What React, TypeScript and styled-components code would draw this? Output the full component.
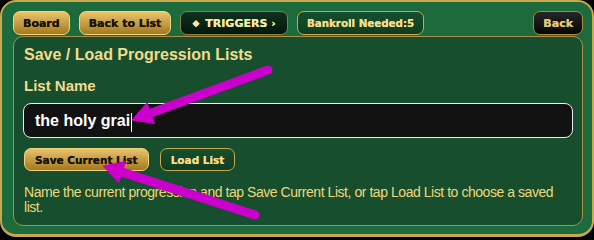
import React from "react";
import styled, { createGlobalStyle } from "styled-components";

const GlobalStyle = createGlobalStyle`
    html, body {
        margin: 0;
        padding: 0;
        background: #000;
    }
    * {
        box-sizing: border-box;
    }
`

const Frame = styled.div`
    position: relative;
    width: 594px;
    height: 237px;
    background: #1d6a3d;
    border: 2px solid #c9a74c;
    border-bottom-width: 3px;
    border-radius: 16px;
    padding: 9px 9px 0 11px;
    font-family: "Liberation Sans", Arial, sans-serif;
`

const TopBar = styled.div`
    display: flex;
    align-items: center;
    gap: 9px;
    height: 24px;
    margin-bottom: 1px;
`

const Spacer = styled.div`
    flex: 1;
`

type Tone = "gold" | "dark" | "green" | "black"

const tones: Record<Tone, string> = {
    gold: `
        background: linear-gradient(#e8c46a, #a4791e);
        border-color: #f0d47e;
        color: #1a1206;
        text-shadow: 0 0 0.6px #1a1206;
    `,
    dark: `
        background: linear-gradient(#0e3320, #03170c);
        border-color: #8d7c48;
        color: #f3eba6;
        text-shadow: 0 0 0.6px #f3eba6;
    `,
    green: `
        background: linear-gradient(#16502e, #0f3d22);
        border-color: #c8a850;
        color: #f5dc8a;
        text-shadow: 0 0 0.6px #f5dc8a;
    `,
    black: `
        background: linear-gradient(#262626, #050505);
        border-color: #a88a3c;
        color: #e8c878;
        text-shadow: 0 0 0.6px #e8c878;
    `,
}

const Button = styled.button<{ $tone: Tone; $size?: number }>`
    height: 24px;
    padding: 0 9px;
    border: 1px solid;
    border-radius: 7px;
    font-family: "DejaVu Sans", Verdana, sans-serif;
    font-weight: bold;
    font-size: ${(p) => p.$size ?? 11}px;
    white-space: nowrap;
    display: flex;
    align-items: center;
    gap: 6px;
    ${(p) => tones[p.$tone]}
`

const Panel = styled.div`
    border: 1px solid #a88f45;
    border-radius: 10px;
    background: #164e2e;
    padding: 9px 9px 10px 9px;
    height: 190px;
`

const Title = styled.div`
    font-size: 16px;
    font-weight: bold;
    color: #f3db8c;
    padding-left: 1px;
`

const Label = styled.div`
    margin-top: 13px;
    font-size: 15px;
    font-weight: bold;
    color: #f3db8c;
    padding-left: 1px;
`

const Field = styled.div`
    margin-top: 9px;
    height: 35px;
    border: 1px solid #ececec;
    border-radius: 8px;
    background: #121212;
    display: flex;
    align-items: center;
    padding-left: 11px;
    font-size: 16px;
    font-weight: bold;
    color: #fff;
`

const Caret = styled.span`
    display: inline-block;
    width: 1px;
    height: 19px;
    background: #fff;
    margin-left: 1px;
    margin-top: 3px;
`

const ActionRow = styled.div`
    display: flex;
    gap: 11px;
    margin-top: 10px;
    padding-left: 1px;

    & > button {
        height: 23px;
        padding: 0 10px;
    }
`

const Hint = styled.div`
    margin-top: 14px;
    padding-left: 1px;
    font-size: 14px;
    letter-spacing: -0.45px;
    line-height: 15px;
    color: #f0d67a;
`

const Overlay = styled.svg`
    position: absolute;
    left: -2px;
    top: -2px;
    pointer-events: none;
`

function Arrow({ tail, tip }: { tail: [number, number]; tip: [number, number] }) {
    const dx = tail[0] - tip[0]
    const dy = tail[1] - tip[1]
    const len = Math.sqrt(dx * dx + dy * dy)
    const ux = dx / len
    const uy = dy / len
    const bx = tip[0] + ux * 20
    const by = tip[1] + uy * 20
    const px = -uy * 11
    const py = ux * 11
    return (
        <g fill="#cc00cc" stroke="#cc00cc">
            <line x1={tail[0]} y1={tail[1]} x2={bx} y2={by} strokeWidth={9} strokeLinecap="round" />
            <polygon strokeWidth={1} points={`${tip[0]},${tip[1]} ${bx + px},${by + py} ${bx - px},${by - py}`} />
        </g>
    )
}

export default function App() {
    return (
        <>
            <GlobalStyle />
            <Frame>
                <TopBar>
                    <Button $tone="gold">Board</Button>
                    <Button $tone="gold">Back to List</Button>
                    <Button $tone="dark" style={{ padding: "0 11px" }}>
                        <span style={{ fontSize: 9 }}>◆</span>
                        <span>TRIGGERS</span>
                        <span style={{ marginLeft: -2 }}>›</span>
                    </Button>
                    <Button $tone="green" $size={10.3}>Bankroll Needed:5</Button>
                    <Spacer />
                    <Button $tone="black">Back</Button>
                </TopBar>
                <Panel>
                    <Title>Save / Load Progression Lists</Title>
                    <Label>List Name</Label>
                    <Field>
                        the holy grai<Caret />
                    </Field>
                    <ActionRow>
                        <Button $tone="gold" $size={10.5}>Save Current List</Button>
                        <Button $tone="green" $size={10.5}>Load List</Button>
                    </ActionRow>
                    <Hint>
                        Name the current progression and tap Save Current List, or tap Load List to choose a saved list.
                    </Hint>
                </Panel>
                <Overlay width="594" height="240">
                    <Arrow tail={[268, 70]} tip={[132, 120]} />
                    <Arrow tail={[255, 215]} tip={[103, 166]} />
                </Overlay>
            </Frame>
        </>
    )
}
